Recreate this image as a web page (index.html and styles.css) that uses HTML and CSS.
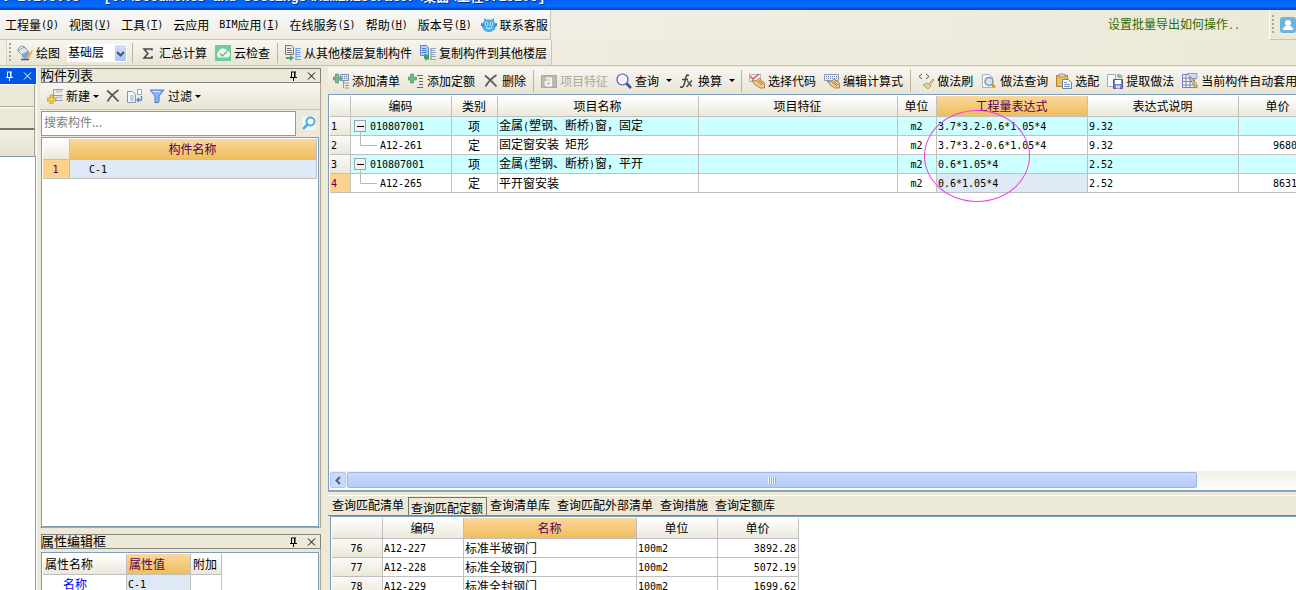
FILE: index.html
```html
<!DOCTYPE html>
<html lang="zh-CN">
<head>
<meta charset="utf-8">
<title>工程0719208</title>
<link rel="stylesheet" href="styles.css">
</head>
<body>
<svg class="defs" aria-hidden="true">
  <symbol id="i-pin" viewBox="0 0 9 10"><path d="M2 1h5M2.5 1v5M6 1v5M5.500 1v5M1 6.500h7M4.500 6.500V10" fill="none" stroke="currentColor"/></symbol>
  <symbol id="i-close" viewBox="0 0 9 9"><path d="M1 1l7 7M8 1L1 8" fill="none" stroke="currentColor"/></symbol>
  <symbol id="i-x" viewBox="0 0 16 16"><path d="M2 2.500c4 3 8 7 11.500 11M13.500 2C9 5 5 9 2.500 13.500" fill="none" stroke="#5c5c60" stroke-width="1.800"/></symbol>
  <symbol id="i-bucket" viewBox="0 0 16 16"><path d="M1 6c0-5 6-7 8-2" fill="none" stroke="#7c93b4"/><path d="M1 6l6-4 5 5-6 4z" fill="#dfe7ef" stroke="#7187a3" stroke-width=".8"/><path d="M5 9l6-3 2 4-5 4-3-2z" fill="#7ea2d8"/><path d="M15.500 4l-5 7-2 4 4-2 3-6z" fill="#efb24b"/><path d="M4 14.500h8" stroke="#455d88" stroke-width="1.500"/></symbol>
  <symbol id="i-sigma" viewBox="0 0 16 16"><path d="M12 5.500V4H4l4 4.500L4 13h8v-2" fill="none" stroke="#444" stroke-width="1.500"/></symbol>
  <symbol id="i-cloud" viewBox="0 0 16 16"><rect width="16" height="16" fill="#6fcd97"/><path d="M4 12.500a3 3 0 0 1-.5-5.500 4.500 4.500 0 0 1 8.500-1 3.300 3.300 0 0 1 .5 6.500z" fill="#f4fbf7"/><path d="M5 8.500L7.500 11 12 6.500" fill="none" stroke="#5cbd85" stroke-width="1.500"/></symbol>
  <symbol id="i-from" viewBox="0 0 16 16"><path d="M.5.500h6l2 2v7h-8z" fill="#ececec" stroke="#777"/><path d="M2 3.500h4M2 5.500h5M2 7.500h5" stroke="#777"/><path d="M11 3v12" stroke="#5b8fe0"/><path d="M11 3.500h5M11 5.500h4M11 7.500h5M11 9.500h4M11 11.500h5M11 14.500h5" stroke="#78a5ea"/><path d="M1 12h4v-2l4 3-4 3v-2H1z" fill="#4aa768"/></symbol>
  <symbol id="i-to" viewBox="0 0 16 16"><path d="M.5.500h6l2 2v8h-8z" fill="#b8d0f6" stroke="#5684d2"/><path d="M2 3.500h4M2 5.500h5M2 7.500h5" stroke="#4f7dcb"/><path d="M11 3v12" stroke="#77879e"/><path d="M11 3.500h5M11 5.500h4M11 7.500h5M11 9.500h4M11 11.500h5M11 14.500h5" stroke="#92a3bb"/><path d="M4 9l5 1v5l-2-1-1 2-2-3z" fill="#3ea260"/></symbol>
  <symbol id="i-face" viewBox="0 0 16 16"><path d="M3 1l2.500 1.500h5L13 1v3l2 3c0 6-3 8-7 8s-7-2-7-8l2-3z" fill="#4bb0ec"/><path d="M0 6l3 1v3L0 9zM16 6l-3 1v3l3-1z" fill="#2f8fd0"/><circle cx="5.500" cy="7" r="1.800" fill="#fff"/><circle cx="10.500" cy="7" r="1.800" fill="#fff"/><circle cx="5.500" cy="7" r=".9" fill="#235b91"/><circle cx="10.500" cy="7" r=".9" fill="#235b91"/><path d="M5 10.500q3 2.500 6 0" fill="none" stroke="#d9f0ff"/></symbol>
  <symbol id="i-new" viewBox="0 0 16 16"><path d="M6.500 1v12M7 1.500h9M7 7.500h9M7 12.500h9" fill="none" stroke="#8c9fba"/><path d="M9 3.500h6M9 9.500h6" stroke="#b8c6dc" stroke-width="2"/><path d="M3 7h3v3h3v3H6v3H3v-3H0v-3h3z" fill="#f5cc55" stroke="#b98d20" stroke-width=".7"/></symbol>
  <symbol id="i-copy" viewBox="0 0 16 16"><path d="M.5 3.500h5l3 3v8h-8z" fill="#f5f8fc" stroke="#7f92ae"/><path d="M3 8h4M3 10h4M3 12h4" stroke="#8fa5c9"/><path d="M10.500 1.500h4v5h-4z" fill="#fff" stroke="#94a4bb"/><path d="M14.500 8v4H10m2-2l-2 2 2 2" fill="none" stroke="#5a83d6" stroke-width="1.300"/></symbol>
  <symbol id="i-filter" viewBox="0 0 16 16"><path d="M1 2h14l-5 6v6l-4 1V8z" fill="#8fb4f2" stroke="#4d79c7"/><path d="M4 3.500h7" stroke="#e3efff"/></symbol>
  <symbol id="i-search" viewBox="0 0 16 16"><path d="M1 1h14v14H1z" fill="#edf7fc"/><circle cx="9.500" cy="6.500" r="4" fill="#fff" stroke="#4aaee4" stroke-width="2"/><path d="M6.500 9.500L2 14" stroke="#4aaee4" stroke-width="2.500"/></symbol>
  <symbol id="i-addlist" viewBox="0 0 16 16"><path d="M7.500 1.500h8v6h-8z" fill="#d8e2f2" stroke="#8092b2"/><path d="M9 3.500h1m1 0h1m1 0h1M9 5.500h1m1 0h1m1 0h1" stroke="#5f7aa8"/><path d="M10 10h6M12 12.500h4M12 15h4M10.500 8v7" stroke="#999"/><path d="M2.500 1h3v3h3v3h-3v3h-3V7H0V4h2.500z" fill="#73b985" stroke="#4f8761" stroke-width=".6"/></symbol>
  <symbol id="i-addquota" viewBox="0 0 16 16"><path d="M9 2.500h6M11 5.500h4M11 8.500h4M11 11.500h4M9 14.500h6" stroke="#666"/><path d="M2.500 1h3v3h3v3h-3v3h-3V7H0V4h2.500z" fill="#73b985" stroke="#4f8761" stroke-width=".6"/></symbol>
  <symbol id="i-feature" viewBox="0 0 16 16"><path d="M.5 2.500h15v12H.5z" fill="#bcbab2" stroke="#aaa79d"/><path d="M5 5.500h5v7H6c-2-1-2-4 0-4h4" fill="none" stroke="#f6f5ef" stroke-width="2"/></symbol>
  <symbol id="i-query" viewBox="0 0 16 16"><circle cx="6.500" cy="6.500" r="5.500" fill="#f4f5ff" stroke="#5058ad" stroke-width="1.200"/><path d="M10.500 10.500L15 15" stroke="#414b9c" stroke-width="2.500"/></symbol>
  <symbol id="i-fx" viewBox="0 0 16 16"><path d="M10 2.500C7 1 7 4 6 8s-1 7-5 6M3 6.500h6" fill="none" stroke="#444" stroke-width="1.500"/><path d="M8 8c2 0 2 5 5 5M13 7.500L7.500 14" fill="none" stroke="#555" stroke-width="1.500"/></symbol>
  <symbol id="i-pick" viewBox="0 0 16 16"><path d="M.5 1.500h11v7H.5z" fill="#edf0f3" stroke="#b5b5b5"/><path d="M1 3l3 3 6-5" fill="none" stroke="#e45858" stroke-width="1.500"/><path d="M3 7l4 1 3-3 5.500 5v5H11L5 11z" fill="#edca8a" stroke="#987641" stroke-width=".8"/><path d="M8 8l5 4M10 7l4 4" stroke="#876b3e" stroke-width=".8"/></symbol>
  <symbol id="i-edit" viewBox="0 0 16 16"><path d="M.5 1.500h14v6H.5z" fill="#e9edf5" stroke="#8e9ab0"/><path d="M2 3.500h1m1 0h1m1 0h1m1 0h1m1 0h1m1 0h1M2 5.500h1m1 0h1m1 0h1m1 0h1m1 0h1m1 0h1" stroke="#6f86ab"/><path d="M3 8l4 1 3-3 5.500 4v5H11l-5-3z" fill="#edca8a" stroke="#987641" stroke-width=".8"/><path d="M8 9l5 4M10 8l4 4" stroke="#876b3e" stroke-width=".8"/></symbol>
  <symbol id="i-brush" viewBox="0 0 16 16"><path d="M4 1L1 3.500 4 6M8 1l3 2.500L8 6" fill="none" stroke="#555"/><path d="M15 6l-4 5-2-1-4 2 5 4 3-3-1-1 4-5z" fill="#ecd28a" stroke="#9b8960" stroke-width=".7"/></symbol>
  <symbol id="i-docfind" viewBox="0 0 16 16"><path d="M1.500 1.500h7l3 3v10h-10z" fill="#f6f9fd" stroke="#a5b3c5"/><circle cx="8" cy="8.500" r="4" fill="#cce5ee" stroke="#84949c" stroke-width="1.500"/><path d="M11 11.500l3 3" stroke="#dc9131" stroke-width="2.500"/></symbol>
  <symbol id="i-paste" viewBox="0 0 16 16"><path d="M.5 2.500h11v11H.5z" fill="#f1bd55" stroke="#b07d2a"/><path d="M3 1h6v3H3z" fill="#d8d5c9" stroke="#8a8270" stroke-width=".7"/><path d="M6.500 6.500h6l3 3v6h-9z" fill="#edf3fb" stroke="#6b83a8"/><path d="M8 9.500h3M8 11.500h6M8 13.500h6" stroke="#8199bf"/></symbol>
  <symbol id="i-extract" viewBox="0 0 16 16"><path d="M.5 1.500h8v12h-8z" fill="#f7fafd" stroke="#9bacc4"/><path d="M6.500 6.500h9v9h-9z" fill="#7c85cc" stroke="#4e569d"/><path d="M8 7h6v4H8z" fill="#fff"/><path d="M9 12.500h4v3H9z" fill="#d5d8ef"/><path d="M15 5c0-4-3-3-4-2m0-2v3h3" fill="none" stroke="#777d91"/></symbol>
  <symbol id="i-auto" viewBox="0 0 16 16"><path d="M.5 1.500h12v13H.5z" fill="#f3f5fd" stroke="#7680c5"/><path d="M1 5h11M1 8.500h11M1 12h11M4 2v12M8 2v12" stroke="#7680c5"/><path d="M5 .5h10v5H9z" fill="#c9daf5" stroke="#6f86ba" stroke-width=".7"/><path d="M7 5l2-1 6 8v3l-2-1z" fill="#efc16c" stroke="#79694a" stroke-width=".7"/></symbol>
  <symbol id="i-user" viewBox="0 0 16 16"><rect width="16" height="16" rx="3" fill="#6db4de"/><circle cx="8" cy="6" r="3" fill="#fff"/><path d="M3 13c0-6 10-6 10 0z" fill="#fff"/></symbol>
  <symbol id="i-minus" viewBox="0 0 18 18"><rect x="2.500" y="3.500" width="11" height="11" fill="#f2f2f2" stroke="#a3a3a3"/><path d="M5 9.500h7" stroke="#000"/><path d="M8.500 15v3" stroke="#bbb"/></symbol>
  <symbol id="i-branch" viewBox="0 0 28 18"><path d="M8.500 0v9.500H25" fill="none" stroke="#b8b8b8"/></symbol>
</svg>

<header class="titlebar"><span class="title">v 1.2.5005 - [C:\Documents and Settings\Administrator\桌面\工程0719208]</span></header>

<div class="menurow">
  <nav class="menubar">
    <button class="menu">工程量<span class="lat">(<u>Q</u>)</span></button>
    <button class="menu">视图<span class="lat">(<u>V</u>)</span></button>
    <button class="menu">工具<span class="lat">(<u>T</u>)</span></button>
    <button class="menu">云应用</button>
    <button class="menu"><span class="lat">BIM</span>应用<span class="lat">(<u>I</u>)</span></button>
    <button class="menu">在线服务<span class="lat">(<u>S</u>)</span></button>
    <button class="menu">帮助<span class="lat">(<u>H</u>)</span></button>
    <button class="menu">版本号<span class="lat">(<u>B</u>)</span></button>
    <button class="menu"><svg class="ico"><use href="#i-face"/></svg>联系客服</button>
  </nav>
  <a class="tip" href="#">设置批量导出如何操作<span class="lat">..</span></a>
  <div class="userbar"><span class="grip"></span><button class="tool" aria-label="用户"><svg class="ico"><use href="#i-user"/></svg></button></div>
</div>

<div class="toolrow">
  <div class="toolbar main-tools">
    <span class="grip"></span>
    <button class="tool"><svg class="ico"><use href="#i-bucket"/></svg>绘图</button>
    <select class="floor" aria-label="楼层"><option>基础层</option></select>
    <span class="sep"></span>
    <button class="tool"><svg class="ico"><use href="#i-sigma"/></svg>汇总计算</button>
    <button class="tool"><svg class="ico"><use href="#i-cloud"/></svg>云检查</button>
    <span class="sep"></span>
    <button class="tool"><svg class="ico"><use href="#i-from"/></svg>从其他楼层复制构件</button>
    <button class="tool"><svg class="ico"><use href="#i-to"/></svg>复制构件到其他楼层</button>
  </div>
</div>

<div class="workspace">
  <aside class="nav">
    <div class="nav-head"><button class="pin" aria-label="固定"><svg><use href="#i-pin"/></svg></button><button class="pin" aria-label="关闭"><svg><use href="#i-close"/></svg></button></div>
    <button class="nav-btn" aria-label="模块导航"></button>
    <button class="nav-btn active" aria-label="绘图输入"></button>
    <div class="nav-bar"></div>
    <div class="nav-body"></div>
  </aside>

  <div class="side">
    <section class="panel list-panel">
      <div class="panel-head"><h2>构件列表</h2><button class="pin" aria-label="固定"><svg><use href="#i-pin"/></svg></button><button class="pin" aria-label="关闭"><svg><use href="#i-close"/></svg></button></div>
      <div class="toolbar side-tools">
        <button class="tool"><svg class="ico"><use href="#i-new"/></svg>新建<span class="arrow"></span></button>
        <button class="tool" aria-label="删除"><svg class="ico"><use href="#i-x"/></svg></button>
        <button class="tool" aria-label="复制"><svg class="ico"><use href="#i-copy"/></svg></button>
        <button class="tool"><svg class="ico"><use href="#i-filter"/></svg>过滤<span class="arrow"></span></button>
      </div>
      <div class="search"><input type="text" placeholder="搜索构件..." aria-label="搜索构件"><button aria-label="搜索"><svg class="ico"><use href="#i-search"/></svg></button></div>
      <div class="box">
        <table class="grid comp">
          <colgroup><col class="w27"><col></colgroup>
          <thead><tr><th></th><th class="hot">构件名称</th></tr></thead>
          <tbody><tr><td class="num on mid"><span class="lat">1</span></td><td class="pick deep"><span class="lat">C-1</span></td></tr></tbody>
        </table>
      </div>
    </section>
    <section class="panel prop-panel">
      <div class="panel-head"><h2>属性编辑框</h2><button class="pin" aria-label="固定"><svg><use href="#i-pin"/></svg></button><button class="pin" aria-label="关闭"><svg><use href="#i-close"/></svg></button></div>
      <div class="box">
        <table class="grid props">
          <colgroup><col class="w84"><col class="w64"><col class="w31"></colgroup>
          <thead><tr><th>属性名称</th><th class="hot">属性值</th><th>附加</th></tr></thead>
          <tbody><tr><td class="indent"><a href="#">名称</a></td><td class="pick"><span class="lat">C-1</span></td><td></td></tr></tbody>
        </table>
      </div>
    </section>
  </div>

  <main class="content">
    <div class="toolbar grid-tools">
      <button class="tool"><svg class="ico"><use href="#i-addlist"/></svg>添加清单</button>
      <button class="tool"><svg class="ico"><use href="#i-addquota"/></svg>添加定额</button>
      <button class="tool"><svg class="ico"><use href="#i-x"/></svg>删除</button>
      <span class="sep"></span>
      <button class="tool" disabled><svg class="ico"><use href="#i-feature"/></svg>项目特征</button>
      <button class="tool drop"><svg class="ico"><use href="#i-query"/></svg>查询<span class="arrow"></span></button>
      <button class="tool drop"><svg class="ico"><use href="#i-fx"/></svg>换算<span class="arrow"></span></button>
      <span class="sep"></span>
      <button class="tool"><svg class="ico"><use href="#i-pick"/></svg>选择代码</button>
      <button class="tool"><svg class="ico"><use href="#i-edit"/></svg>编辑计算式</button>
      <span class="sep"></span>
      <button class="tool"><svg class="ico"><use href="#i-brush"/></svg>做法刷</button>
      <button class="tool"><svg class="ico"><use href="#i-docfind"/></svg>做法查询</button>
      <button class="tool"><svg class="ico"><use href="#i-paste"/></svg>选配</button>
      <button class="tool"><svg class="ico"><use href="#i-extract"/></svg>提取做法</button>
      <button class="tool"><svg class="ico"><use href="#i-auto"/></svg>当前构件自动套用</button>
    </div>

    <div class="box main-box">
      <table class="grid items">
        <colgroup><col class="w21"><col class="w101"><col class="w46"><col class="w201"><col class="w199"><col class="w39"><col class="w151"><col class="w151"><col class="w79"></colgroup>
        <thead><tr><th></th><th>编码</th><th>类别</th><th>项目名称</th><th>项目特征</th><th>单位</th><th class="hot">工程量表达式</th><th>表达式说明</th><th>单价</th></tr></thead>
        <tbody>
          <tr class="bill"><td class="num"><span class="lat">1</span></td><td class="tree"><div class="node"><svg class="minus"><use href="#i-minus"/></svg><span class="lat">010807001</span></div></td><td class="mid">项</td><td>金属<span class="lat">(</span>塑钢、断桥<span class="lat">)</span>窗，固定</td><td></td><td class="mid"><span class="lat">m2</span></td><td><span class="lat">3.7*3.2-0.6*1.05*4</span></td><td><span class="lat">9.32</span></td><td></td></tr>
          <tr><td class="num"><span class="lat">2</span></td><td class="tree"><div class="node"><svg class="branch"><use href="#i-branch"/></svg><span class="lat">A12-261</span></div></td><td class="mid">定</td><td>固定窗安装<span class="lat"> </span>矩形</td><td></td><td class="mid"><span class="lat">m2</span></td><td><span class="lat">3.7*3.2-0.6*1.05*4</span></td><td><span class="lat">9.32</span></td><td class="price"><span class="lat">9680</span></td></tr>
          <tr class="bill"><td class="num"><span class="lat">3</span></td><td class="tree"><div class="node"><svg class="minus"><use href="#i-minus"/></svg><span class="lat">010807001</span></div></td><td class="mid">项</td><td>金属<span class="lat">(</span>塑钢、断桥<span class="lat">)</span>窗，平开</td><td></td><td class="mid"><span class="lat">m2</span></td><td><span class="lat">0.6*1.05*4</span></td><td><span class="lat">2.52</span></td><td></td></tr>
          <tr><td class="num on"><span class="lat">4</span></td><td class="tree"><div class="node"><svg class="branch"><use href="#i-branch"/></svg><span class="lat">A12-265</span></div></td><td class="mid">定</td><td>平开窗安装</td><td></td><td class="mid"><span class="lat">m2</span></td><td class="pick"><span class="lat">0.6*1.05*4</span></td><td><span class="lat">2.52</span></td><td class="price"><span class="lat">8631</span></td></tr>
        </tbody>
      </table>
      <div class="ring"></div>
      <div class="hscroll">
        <button aria-label="向左滚动"><svg viewBox="0 0 8 9"><path d="M6 1L2.500 4.500 6 8" fill="none" stroke="#4d6185" stroke-width="2"/></svg></button>
        <div class="thumb"><span class="ridges"></span></div>
      </div>
    </div>

    <section class="lookup">
      <nav class="tabs">
        <button>查询匹配清单</button><button class="sel">查询匹配定额</button><button>查询清单库</button><button>查询匹配外部清单</button><button>查询措施</button><button>查询定额库</button>
      </nav>
      <div class="box">
        <table class="grid quota">
          <colgroup><col class="w51"><col class="w81"><col class="w173"><col class="w81"><col class="w81"></colgroup>
          <thead><tr><th></th><th>编码</th><th class="hot">名称</th><th>单位</th><th>单价</th></tr></thead>
          <tbody>
            <tr><td class="num mid"><span class="lat">76</span></td><td><span class="lat">A12-227</span></td><td>标准半玻钢门</td><td><span class="lat">100m2</span></td><td class="right"><span class="lat">3892.28</span></td></tr>
            <tr><td class="num mid"><span class="lat">77</span></td><td><span class="lat">A12-228</span></td><td>标准全玻钢门</td><td><span class="lat">100m2</span></td><td class="right"><span class="lat">5072.19</span></td></tr>
            <tr><td class="num mid"><span class="lat">78</span></td><td><span class="lat">A12-229</span></td><td>标准全封钢门</td><td><span class="lat">100m2</span></td><td class="right"><span class="lat">1699.62</span></td></tr>
          </tbody>
        </table>
      </div>
    </section>
  </main>
</div>
</body>
</html>
```
FILE: styles.css
```css
* { box-sizing: border-box; }
body {
  margin: 0;
  height: 100vh;
  display: flex;
  flex-direction: column;
  overflow: hidden;
  background: #ece9d8;
  color: #000;
  font: 12px/14px "Noto Sans CJK SC", sans-serif;
}
.defs { position: absolute; width: 0; height: 0; }
button { font: inherit; color: inherit; background: none; border: 0; padding: 0; white-space: nowrap; }
.lat { font-family: "DejaVu Sans Mono", monospace; font-size: 10px; white-space: pre; }

/* title bar */
.titlebar {
  flex: none;
  height: 10px;
  display: flex;
  align-items: flex-end;
  overflow: hidden;
  background: linear-gradient(#0060f8, #0a6cff 60%, #0040c8);
  color: #fff;
}
.title { padding: 0 0 4px 2px; font: bold 13px/16px "Liberation Mono", "Noto Sans CJK SC", monospace; text-shadow: 1px 1px #0a2a80; white-space: pre; }

/* menu and tool rows */
.menurow { flex: none; height: 30px; display: flex; background: linear-gradient(90deg, #f4f3ee, #ece9d8); }
.menubar {
  display: flex;
  align-items: center;
  background: linear-gradient(#f9f9f8, #eeebe0);
  border-right: 1px solid #c9c5b2;
  border-bottom: 1px solid #c9c5b2;
}
.menu { display: flex; align-items: center; padding: 0 5px; }
.menu .ico { margin-right: 3px; }
.menu:last-child { padding: 0 2px 0 4px; }
.ico { width: 16px; height: 16px; flex: none; }
.tip { margin-left: auto; margin-right: 29px; align-self: center; color: #2f6b00; text-decoration: none; }
.userbar {
  width: 27px;
  display: flex;
  align-items: center;
  gap: 6px;
  padding-left: 2px;
  overflow: hidden;
  border-left: 1px solid #fff;
  border-bottom: 1px solid #c9c5b2;
}
.userbar .tool { padding: 0; }
.grip { flex: none; width: 2px; height: 20px; background: repeating-linear-gradient(#a9a694 0 2px, transparent 2px 4px); }
.toolrow { flex: none; height: 26px; display: flex; border-bottom: 1px solid #c9c5b2; background: linear-gradient(90deg, #f0eee4, #ece9d8); }
.toolbar { display: flex; align-items: center; background: linear-gradient(#f7f6f1, #e9e5d4); }
.main-tools { margin-left: 6px; padding-left: 2px; border-left: 1px solid #d8d5c4; border-right: 1px solid #c9c5b2; }
.main-tools .grip { margin-right: 2px; }
.tool { display: flex; align-items: center; gap: 3px; padding: 0 4px; }
.tool:disabled { color: #aca899; }
.sep { flex: none; width: 1px; height: 20px; margin: 0 3px; background: #b9b5a2; }
.floor {
  width: 60px;
  height: 18px;
  margin: 0 2px 0 3px;
  padding: 0 0 2px 1px;
  border: 0;
  font: inherit;
  appearance: none;
  background:
    url("data:image/svg+xml,%3Csvg xmlns='http://www.w3.org/2000/svg' width='9' height='7'%3E%3Cpath d='M1 1l3.500 3.500L8 1' fill='none' stroke='%233c5580' stroke-width='2'/%3E%3C/svg%3E") 49px 7px no-repeat,
    linear-gradient(#d3e0fd, #a9c2f7) 48px 1px / 11px 16px no-repeat,
    #fff;
}
.arrow { width: 0; height: 0; border: 3px solid transparent; border-top-color: #000; border-bottom: 0; }
.drop { padding-right: 3px; }
.drop .arrow { margin-left: 4px; }

/* docked columns */
.workspace { flex: 1; min-height: 0; display: flex; padding-top: 1px; }
.nav { flex: none; width: 37px; display: flex; flex-direction: column; padding-top: 1px; border-right: 1px solid #fff; }
.nav-head { height: 16px; display: flex; align-items: center; justify-content: flex-end; gap: 9px; padding-right: 4px; background: #0054e3; color: #fff; }
.nav-btn { height: 23px; margin-right: 1px; background: #ece9d8; border: 1px solid #aca899; border-left: 0; border-top-color: #fff; }
.nav-btn.active { border-bottom: 2px solid #77746a; }
.nav-bar { height: 26px; margin-right: 1px; background: linear-gradient(#f2f0e6, #e5e1cf); border-right: 1px solid #aca899; }
.nav-body { flex: 1; background: #fff; border: 1px solid #7f9db9; border-left: 0; border-bottom: 0; }
.side { flex: none; width: 281px; margin: 1px 0 0 3px; display: flex; flex-direction: column; gap: 6px; }
.panel { display: flex; flex-direction: column; min-height: 0; border-right: 1px solid #aca899; }
.list-panel { flex: 1; border-bottom: 1px solid #aca899; }
.prop-panel { flex: none; height: 56px; }
.panel-head { flex: none; height: 15px; display: flex; align-items: center; gap: 9px; padding-right: 4px; border: 1px solid #85837b; margin-right: -1px; margin-left: 1px; }
.panel-head h2 { margin: 0 auto 0 -1px; padding-bottom: 2px; font-size: 13px; line-height: 13px; font-weight: normal; }
.pin { display: flex; }
.pin svg { width: 9px; height: 10px; }
.side-tools { flex: none; height: 27px; padding: 0 4px; border-bottom: 1px solid #c9c5b2; }
.side-tools .tool { padding: 0 3px; }
.search { flex: none; height: 26px; display: flex; align-items: center; gap: 5px; margin-left: 1px; padding-right: 3px; margin-bottom: 1px; }
.search input { flex: 1; min-width: 0; height: 25px; padding: 0 2px 4px; border: 1px solid #7f9db9; font: inherit; background: #fff; }
.search input::placeholder { color: #808080; opacity: 1; }
.search button { display: flex; }
.box { flex: 1; min-height: 0; overflow: hidden; background: #fff; border: 1px solid #7f9db9; padding: 1px; }
.side .box { margin: 0 1px; }
.prop-panel .box { margin-top: 3px; border-bottom: 0; }

/* data grids */
.grid { table-layout: fixed; border-collapse: separate; border-spacing: 0; }
.grid th, .grid td {
  padding: 0 2px 0 1px;
  border-right: 1px solid #c0c0c0;
  border-bottom: 1px solid #c0c0c0;
  white-space: nowrap;
  overflow: hidden;
  vertical-align: middle;
  text-align: left;
}
.grid th { height: 21px; font-weight: normal; text-align: center; background: linear-gradient(#fff, #ebe8da); }
.grid td { height: 19px; line-height: 14px; }
.grid th.hot { color: #550055; background: linear-gradient(#fad79c, #efbe5c); }
.grid td.num { background: linear-gradient(#fbfaf7, #ebe8da); }
.grid td.on { color: #550055; background: #ffd28c; }
.grid td.mid { text-align: center; }
.grid td.right { text-align: right; }
.grid td.pick { background: #dfe8f5; }
.grid td.deep { padding-left: 19px; }
.bill td { background: #ccffff; }
.comp { width: 100%; }
.props { width: 179px; }
.props th { text-align: left; padding-left: 2px; }
.props td.indent { padding-left: 20px; }
.props a { color: #0000ff; }
.items { width: 988px; }
.items td.price { text-align: right; padding-right: 20px; }
.items td.tree { padding: 0 0 0 1px; }
.node { display: flex; align-items: center; height: 18px; }
.node .lat { padding-top: 2px; }
.minus { width: 18px; height: 18px; }
.branch { width: 28px; height: 18px; }
.quota { width: 467px; }
.w21 { width: 21px; } .w27 { width: 27px; } .w31 { width: 31px; } .w39 { width: 39px; }
.w46 { width: 46px; } .w51 { width: 51px; } .w64 { width: 64px; } .w79 { width: 79px; }
.w81 { width: 81px; } .w84 { width: 84px; } .w101 { width: 101px; } .w151 { width: 151px; }
.w173 { width: 173px; } .w199 { width: 199px; } .w201 { width: 201px; }

/* main area */
.content { flex: 1; min-width: 0; display: flex; flex-direction: column; margin-left: 7px; overflow: hidden; }
.grid-tools { flex: none; height: 27px; padding-left: 1px; overflow: hidden; }
.grid-tools .sep { height: 22px; }
.main-box { position: relative; display: flex; flex-direction: column; border-right: 0; padding-right: 0; }
.ring { position: absolute; left: 595px; top: 15px; width: 106px; height: 92px; border: 1px solid #f03cf0; border-radius: 50%; }
.hscroll { flex: none; margin-top: auto; height: 18px; display: flex; background: linear-gradient(#f0eee6, #fff); }
.hscroll button { width: 16px; margin: 1px 0; display: flex; align-items: center; justify-content: center; border: 1px solid #b4c6ee; border-radius: 2px; background: #cad9fd; }
.hscroll button svg { width: 8px; height: 9px; }
.thumb { width: 88%; margin: 1px; display: flex; align-items: center; justify-content: center; border: 1px solid #9db6ea; border-radius: 2px; background: linear-gradient(#cbdafd, #b4cafa); }
.ridges { width: 8px; height: 7px; background: repeating-linear-gradient(90deg, #f4f8ff 0 1px, #8eaae6 1px 2px); }
.lookup { flex: none; height: 99px; display: flex; flex-direction: column; padding-top: 3px; border-top: 1px solid #aca899; }
.lookup .box { margin-left: 2px; border-right: 0; border-bottom: 0; }
.tabs { flex: none; height: 21px; display: flex; padding-left: 1px; border-top: 1px solid #fff; border-bottom: 1px solid #85837b; }
.tabs button { padding: 0 4px 2px 3px; }
.tabs .sel { margin-top: 1px; padding: 2px 3px 0 2px; border: 1px solid #77746a; border-bottom: 0; }
```
